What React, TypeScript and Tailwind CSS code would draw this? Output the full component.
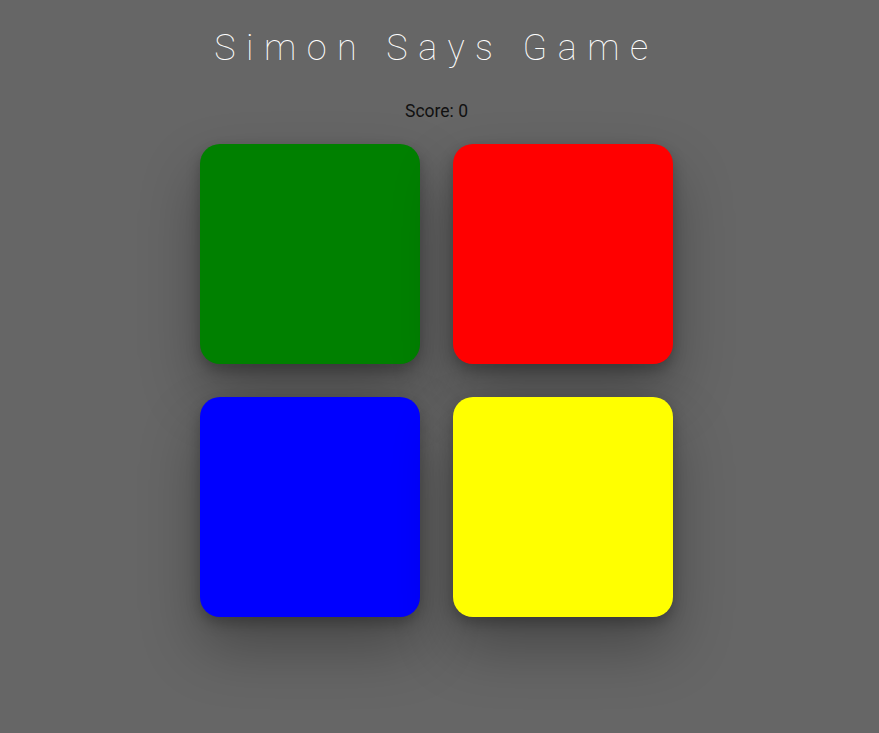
import React from "react";

export default function App() {
  const colors = ["bg-[#008000]", "bg-[#ff0000]", "bg-[#0000ff]", "bg-[#ffff00]"];
  return (
    <div
      className="min-h-[733px] w-full bg-[#666666] flex flex-col items-center pr-[6px]"
      style={{ fontFamily: "Roboto, 'Liberation Sans', sans-serif" }}
    >
      <h1 className="mt-[27px] text-[36px] leading-[42px] font-thin tracking-[10.5px] text-white">
        Simon Says Game
      </h1>
      <p className="mt-[31px] text-[17.5px] leading-[22px] text-[#111111]">Score: 0</p>
      <div className="mt-[22px] grid grid-cols-2 gap-[33px]">
        {colors.map((c, i) => (
          <div
            key={i}
            className={`w-[220px] h-[220px] rounded-[20px] ${c} shadow-[0_30px_60px_rgba(0,0,0,0.3),0_6px_14px_rgba(0,0,0,0.25)]`}
          />
        ))}
      </div>
    </div>
  );
}
